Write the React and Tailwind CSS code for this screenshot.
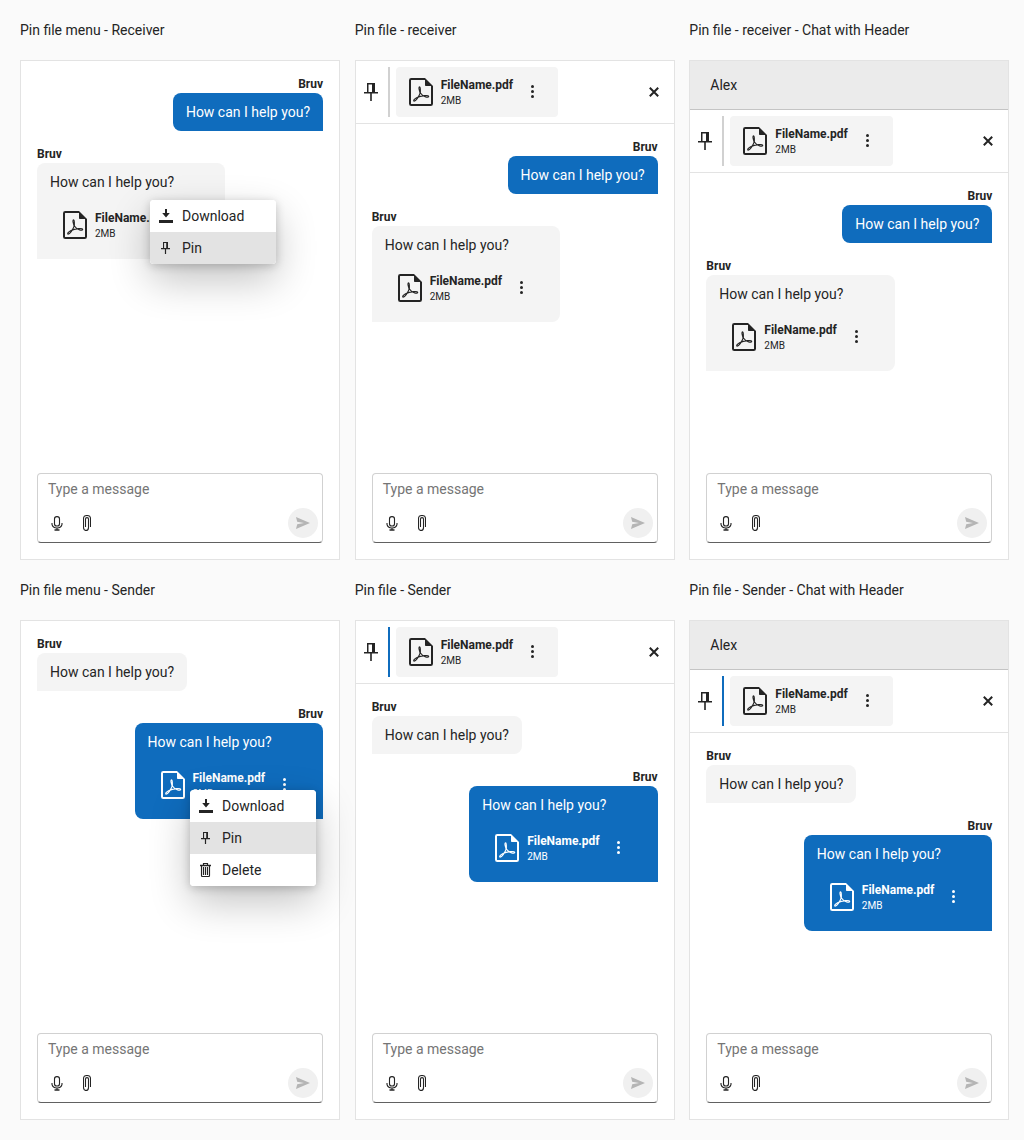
import React from "react";

function PdfIcon() {
  return (
    <svg width="24" height="28" viewBox="0 0 24 28" fill="none" className="shrink-0">
      <path d="M16 1H2.3Q1 1 1 2.3V25.7Q1 27 2.3 27H21.7Q23 27 23 25.7V8" stroke="currentColor" strokeWidth="2" />
      <path d="M16 0L24 8H16.8Q16 8 16 7.2Z" fill="currentColor" />
      <path
        d="M10.6 8.8C9.7 8.9 9.9 10.6 10.3 12C10.6 13.1 11 14.3 11.1 15.2C10.6 17 9.4 19 8.2 20.6C7.3 21.8 5.7 23.3 5 23.1C4 22.6 5.6 20.7 7.6 19.7C10 18.5 13 17.8 15.4 17.6C17.3 17.4 19.6 17.5 19.7 18.4C19.8 19.3 18.1 19.4 16.7 18.9C14.8 18.3 12.5 16.8 11.4 15C11.2 13.5 11.8 9 10.6 8.8Z"
        stroke="currentColor"
        strokeWidth="1.15"
      />
    </svg>
  );
}

function PinIcon() {
  return (
    <svg width="14" height="18" viewBox="0 0 14 18" fill="currentColor">
      <path d="M3 0H11V9H14V10.6H7.8V18H6.2V10.6H0V9H3ZM4.5 1.4V9H8V1.4Z" fillRule="evenodd" />
    </svg>
  );
}

function SmallPinIcon() {
  return (
    <svg width="9" height="12" viewBox="0 0 9 12" fill="currentColor">
      <path d="M2 0H7V6H9V7.2H5.1V12H3.9V7.2H0V6H2ZM3.1 1.1V6H5.2V1.1Z" fillRule="evenodd" />
    </svg>
  );
}

function DownloadIcon() {
  return (
    <svg width="14" height="14" viewBox="0 0 14 14" fill="currentColor">
      <path d="M6 0H8V4H10.8L7 8.4L3.2 4H6ZM0 11H14V14H0Z" />
    </svg>
  );
}

function TrashIcon() {
  return (
    <svg width="11" height="14" viewBox="0 0 11 14" fill="none" stroke="currentColor">
      <path d="M0 2.5H11" strokeWidth="1.4" />
      <path d="M3.5 2V.5H7.5V2M1.5 3V12.6Q1.5 13.5 2.4 13.5H8.6Q9.5 13.5 9.5 12.6V3M3.5 4V12M5.5 4V12M7.5 4V12" strokeWidth="1.15" />
    </svg>
  );
}

function MicIcon() {
  return (
    <svg width="12" height="15" viewBox="0 0 12 15" fill="none" stroke="currentColor" strokeWidth="1.1">
      <rect x="3.5" y=".6" width="5" height="9.4" rx="2.3" />
      <path d="M1 7V8.4Q1.6 12 6 12T11 8.4V7M6 12V14" />
      <path d="M3.5 14H8.5" strokeWidth="1.5" />
    </svg>
  );
}

function ClipIcon() {
  return (
    <svg width="8" height="16" viewBox="0 0 8 16" fill="none" stroke="currentColor" strokeWidth="1.1">
      <path d="M2.5 12V4Q2.5 2.6 4 2.6T5.5 4V12.5Q5.5 15.5 3 15.5Q.5 15.5 .5 12.5V3.5Q.5 .5 4 .5T7.5 3.5V12" />
    </svg>
  );
}

function Dots() {
  return (
    <svg width="3" height="13" viewBox="0 0 3 13" fill="currentColor">
      <circle cx="1.5" cy="1.5" r="1.5" />
      <circle cx="1.5" cy="6.5" r="1.5" />
      <circle cx="1.5" cy="11.5" r="1.5" />
    </svg>
  );
}

function FileCard() {
  return (
    <div className="flex h-[50px] items-center pl-[13px]">
      <PdfIcon />
      <div className="ml-2">
        <div className="text-[12px] leading-[16px] font-bold">FileName.pdf</div>
        <div className="-mb-px pt-px text-[10px] leading-[14px]">2MB</div>
      </div>
      <div className="mr-[10.75px] ml-[4.25px] flex w-[30px] justify-center pb-px">
        <Dots />
      </div>
    </div>
  );
}

function Message({ sent, file }) {
  return (
    <div className={sent ? "flex flex-col items-end" : "flex flex-col items-start"}>
      <div className="mb-0.5 text-[12px] leading-[14px] font-bold">Bruv</div>
      <div
        className={
          sent
            ? "rounded-lg rounded-br-none bg-[#0f6cbd] px-[13px] py-[9px] text-white"
            : "rounded-lg rounded-bl-none bg-[#f4f4f4] px-[13px] py-[9px]"
        }
      >
        <div className="leading-5">How can I help you?</div>
        {file && (
          <div className="mt-2">
            <FileCard />
          </div>
        )}
      </div>
    </div>
  );
}

function MenuItem({ icon, label, active, odd }) {
  return (
    <div className={active ? "flex h-8 items-center bg-[#e3e3e3]" : "flex h-8 items-center bg-white"}>
      <div className={odd ? "flex w-8 items-center justify-center pr-px" : "flex w-8 items-center justify-center"}>
        {icon}
      </div>
      <div>{label}</div>
    </div>
  );
}

function Menu({ sender }) {
  return (
    <div
      className={
        sender
          ? "absolute top-[169px] left-[169px] w-[126px] rounded shadow-[0_2px_10px_rgba(0,0,0,0.2),0_16px_40px_rgba(0,0,0,0.24)]"
          : "absolute top-[139px] left-[129px] w-[126px] rounded shadow-[0_2px_10px_rgba(0,0,0,0.2),0_16px_40px_rgba(0,0,0,0.24)]"
      }
    >
      <div className="overflow-hidden rounded bg-white">
        <MenuItem icon={<DownloadIcon />} label="Download" />
        <MenuItem icon={<SmallPinIcon />} label="Pin" active odd />
        {sender && <MenuItem icon={<TrashIcon />} label="Delete" odd />}
      </div>
    </div>
  );
}

function PinnedBar({ sender }) {
  return (
    <div className="flex h-[63px] items-center border-b border-[#e3e3e3]">
      <div className="flex w-8 justify-center pr-0.5">
        <PinIcon />
      </div>
      <div className={sender ? "h-[50px] w-0.5 bg-[#0f6cbd]" : "h-[50px] w-0.5 bg-[#d1d1d1]"} />
      <div className="ml-1.5 rounded bg-[#f4f4f4]">
        <FileCard />
      </div>
      <svg width="10" height="10" viewBox="0 0 10 10" className="mr-[15px] ml-auto" stroke="currentColor" strokeWidth="2">
        <path d="M.8 .8L9.2 9.2M9.2 .8L.8 9.2" />
      </svg>
    </div>
  );
}

function Composer() {
  return (
    <div className="mx-4 mb-4 flex h-[70px] flex-col rounded border border-[#d1d1d1] border-b-[#616161]">
      <div className="mt-[5px] ml-2.5 leading-5 text-[#757575]">Type a message</div>
      <div className="mt-[9px] flex h-[30px] items-center pr-1">
        <div className="ml-1 flex w-[30px] justify-center">
          <MicIcon />
        </div>
        <div className="flex w-[30px] justify-center">
          <ClipIcon />
        </div>
        <div className="ml-auto flex size-[30px] items-center justify-center rounded-full bg-[#f0f0f0] text-[#b5b5b5]">
          <svg width="14" height="12" viewBox="0 0 14 12" fill="currentColor">
            <path d="M0 0L14 6L0 12L1.2 7.3L8 6L1.2 4.7Z" />
          </svg>
        </div>
      </div>
    </div>
  );
}

function Chat({ title, sender, pinned, header, menu }) {
  return (
    <section className="w-80">
      <h2 className="flex h-[60px] items-center">{title}</h2>
      <div className="relative flex h-[500px] flex-col border border-[#e3e3e3] bg-white">
        {header && (
          <div className="flex h-[49px] items-center border-b border-[#c4c4c4] bg-[#ebebeb] pl-5">Alex</div>
        )}
        {pinned && <PinnedBar sender={sender} />}
        <div className="flex flex-1 flex-col gap-4 p-4">
          <Message sent={!sender} />
          <Message sent={sender} file />
        </div>
        <Composer />
        {menu && <Menu sender={sender} />}
      </div>
    </section>
  );
}

export default function App() {
  return (
    <div className="h-[1140px] w-[1024px] overflow-hidden bg-[#fafafa] px-5 font-[Roboto,sans-serif] text-[14px] text-[#242424]">
      <div className="grid grid-cols-3 gap-x-5">
        <Chat title="Pin file menu - Receiver" menu />
        <Chat title="Pin file - receiver" pinned />
        <Chat title="Pin file - receiver - Chat with Header" pinned header />
        <Chat title="Pin file menu - Sender" sender menu />
        <Chat title="Pin file - Sender" sender pinned />
        <Chat title="Pin file - Sender - Chat with Header" sender pinned header />
      </div>
    </div>
  );
}
